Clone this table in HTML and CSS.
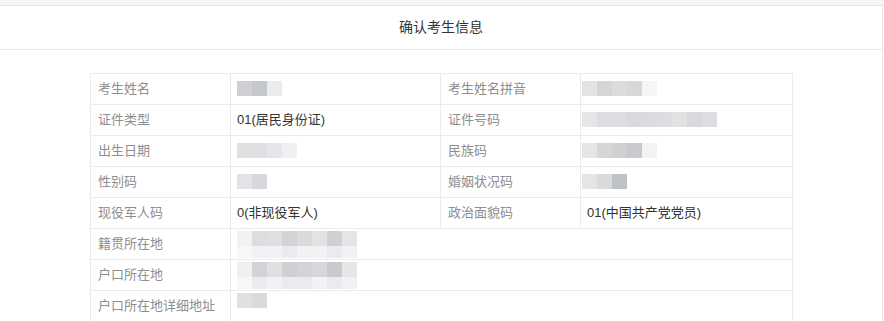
FILE: index.html
```html
<!DOCTYPE html>
<html lang="zh-CN">
<head>
<meta charset="utf-8">
<title>确认考生信息</title>
<link rel="stylesheet" href="styles.css">
</head>
<body>
<div class="topband"></div>
<div class="card">
  <div class="card-head">确认考生信息</div>
  <div class="card-body">
    <div class="info">
      <div class="lbl">考生姓名</div>
      <div class="val"><span class="mosaic"><i class="c1"></i><i class="c2"></i><i class="c3"></i></span></div>
      <div class="lbl">考生姓名拼音</div>
      <div class="val"><span class="mosaic shift"><i class="c4"></i><i class="c5"></i><i class="c6"></i><i class="c7"></i><i class="c8"></i></span></div>

      <div class="lbl">证件类型</div>
      <div class="val">01(居民身份证)</div>
      <div class="lbl">证件号码</div>
      <div class="val"><span class="mosaic shift"><i class="d1"></i><i class="d2"></i><i class="d2"></i><i class="d3"></i><i class="d4"></i><i class="d2"></i><i class="d5"></i><i class="d3"></i><i class="d2"></i></span></div>

      <div class="lbl">出生日期</div>
      <div class="val"><span class="mosaic"><i class="e1"></i><i class="e1"></i><i class="e2"></i><i class="e3"></i></span></div>
      <div class="lbl">民族码</div>
      <div class="val"><span class="mosaic shift"><i class="f1"></i><i class="f2"></i><i class="f3"></i><i class="f4"></i><i class="f5"></i></span></div>

      <div class="lbl">性别码</div>
      <div class="val"><span class="mosaic"><i class="g1"></i><i class="g2"></i></span></div>
      <div class="lbl">婚姻状况码</div>
      <div class="val"><span class="mosaic shift"><i class="h1"></i><i class="h2"></i><i class="h3"></i></span></div>

      <div class="lbl">现役军人码</div>
      <div class="val">0(非现役军人)</div>
      <div class="lbl">政治面貌码</div>
      <div class="val">01(中国共产党党员)</div>

      <div class="lbl">籍贯所在地</div>
      <div class="val wide top"><span class="mosaic two"><i class="k0"></i><i class="k1"></i><i class="k2"></i><i class="k3"></i><i class="k4"></i><i class="k5"></i><i class="k6"></i><i class="k7"></i><i class="l0"></i><i class="l1"></i><i class="l1"></i><i class="l2"></i><i class="l1"></i><i class="l1"></i><i class="l2"></i><i class="l1"></i></span></div>

      <div class="lbl">户口所在地</div>
      <div class="val wide top"><span class="mosaic two"><i class="m0"></i><i class="m1"></i><i class="m2"></i><i class="m3"></i><i class="m4"></i><i class="m5"></i><i class="m6"></i><i class="m7"></i><i class="l0"></i><i class="l2"></i><i class="l1"></i><i class="l2"></i><i class="l2"></i><i class="l1"></i><i class="l2"></i><i class="l1"></i></span></div>

      <div class="lbl">户口所在地详细地址</div>
      <div class="val wide top"><span class="mosaic"><i class="n1"></i><i class="n2"></i></span></div>
    </div>
  </div>
</div>
</body>
</html>
```

FILE: styles.css
```css
html, body {
  margin: 0;
  padding: 0;
  background: #ffffff;
  font-family: "Liberation Sans", "Noto Sans CJK SC", sans-serif;
  color: #333333;
  overflow: hidden;
}

.topband {
  height: 5px;
  background: #f6f6f6;
  border-bottom: 1px solid #e8e8e8;
}

.card {
  width: 882px;
  border-right: 1px solid #e8e8e8;
  background: #ffffff;
}

.card-head {
  height: 41px;
  padding-bottom: 2px;
  display: flex;
  align-items: center;
  justify-content: center;
  font-size: 14px;
  line-height: 1;
  color: #333333;
  border-bottom: 1px solid #e8e8e8;
}

.card-body {
  padding: 23px 0 0 90px;
}

.info {
  display: grid;
  grid-template-columns: 139px 209px 139px 211px;
  grid-auto-rows: 30px;
  gap: 1px;
  padding: 1px;
  width: max-content;
  background: #ebebeb;
}

.lbl, .val {
  background: #ffffff;
  display: flex;
  align-items: center;
  font-size: 13px;
  line-height: 1;
  padding-bottom: 1px;
  white-space: nowrap;
}

.lbl {
  padding-left: 7px;
  color: #8e8e8e;
}

.val {
  padding-left: 6px;
  color: #333333;
}

.val.wide {
  grid-column: span 3;
}

.val.top {
  align-items: flex-start;
  padding-top: 2px;
  padding-bottom: 0;
}

.mosaic {
  display: grid;
  grid-auto-flow: column;
  grid-auto-columns: 15px;
  grid-template-rows: 15px;
}

.mosaic.shift {
  margin-left: -5px;
}

.mosaic.two {
  grid-auto-flow: row;
  grid-template-columns: repeat(8, 15px);
  grid-template-rows: 15px 12px;
}

.mosaic i {
  display: block;
}

.c1 { background: #cfcfd1; }
.c2 { background: #c3c8cb; }
.c3 { background: #ebebed; }

.c4 { background: #e3e3e3; }
.c5 { background: #d5d5d7; }
.c6 { background: #dcdcdc; }
.c7 { background: #d8d8d8; }
.c8 { background: #f5f6f8; }

.d1 { background: #e6e6e8; }
.d2 { background: #dcdde0; }
.d3 { background: #d8d9dc; }
.d4 { background: #dadbde; }
.d5 { background: #e1e2e4; }

.e1 { background: #e0e0e2; }
.e2 { background: #e6e6ea; }
.e3 { background: #f0f0f2; }

.f1 { background: #e5e5e5; }
.f2 { background: #d6d6d8; }
.f3 { background: #cfd0d2; }
.f4 { background: #c9cacd; }
.f5 { background: #f2f3f5; }

.g1 { background: #e3e3e5; }
.g2 { background: #d6d8db; }

.h1 { background: #e5e5e7; }
.h2 { background: #dadadc; }
.h3 { background: #c0c3c6; }

.k0 { background: #f2f2f2; }
.k1 { background: #dcdde0; }
.k2 { background: #dedfe1; }
.k3 { background: #d2d3d6; }
.k4 { background: #d9dadc; }
.k5 { background: #e2e3e5; }
.k6 { background: #cfd0d3; }
.k7 { background: #e4e5e7; }

.l0 { background: #f7f7f7; }
.l1 { background: #f1f2f3; }
.l2 { background: #eaebed; }

.m0 { background: #f0f0f0; }
.m1 { background: #d2d3d6; }
.m2 { background: #dfe0e2; }
.m3 { background: #cfd0d3; }
.m4 { background: #d3d4d7; }
.m5 { background: #d6d7da; }
.m6 { background: #c9cacd; }
.m7 { background: #e5e6e8; }

.n1 { background: #e0e0e2; }
.n2 { background: #dadadc; }
```
